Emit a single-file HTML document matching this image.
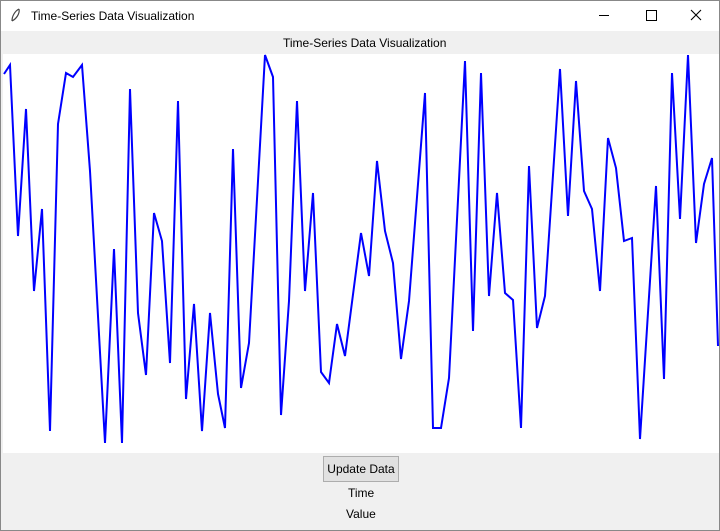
<!DOCTYPE html>
<html><head><style>
body{margin:0;width:720px;height:531px;overflow:hidden;font-family:"Liberation Sans",sans-serif;background:#f0f0f0;position:relative}
.win{position:absolute;left:0;top:0;width:718px;height:529px;border:1px solid #888;background:#f0f0f0}
.tb{position:absolute;left:0;top:0;width:718px;height:30px;background:#fff}
.t{position:absolute;font-size:12px;color:#000}
.btn{position:absolute;left:322px;top:455px;width:74px;height:24px;border:1px solid #adadad;background:#e1e1e1;font-size:12px;text-align:center;line-height:24px}
</style></head><body>
<div class="win">
<div class="tb"></div>
<svg style="position:absolute;left:8px;top:7px" width="14" height="16"><path d="M10 1 C6 3 3 8 3 13 M10 1 C11 6 7 11 3 13" stroke="#444" fill="none" stroke-width="1.2"/></svg>
<div class="t" style="left:30px;top:8px">Time-Series Data Visualization</div>
<div style="position:absolute;left:598px;top:14px;width:10px;height:1px;background:#000"></div>
<div style="position:absolute;left:645px;top:9px;width:9px;height:9px;border:1px solid #000"></div>
<svg style="position:absolute;left:689px;top:8px" width="12" height="12"><path d="M1 1 L11 11 M11 1 L1 11" stroke="#000" stroke-width="1.1"/></svg>
<div class="t" style="left:282px;top:35px">Time-Series Data Visualization</div>
<svg style="position:absolute;left:2px;top:53px" width="716" height="399" viewBox="2 53 716 399"><rect x="2" y="53" width="716" height="399" fill="#fff"/>
<polyline fill="none" stroke="#0000ff" stroke-width="2" points="3,73 9,64 17,235 25,108 33,290 41,208 49,430 57,123 65,72 72,76 81,64 89,170 104,442 113,248 121,442 129,88 137,312 145,374 153,212 161,240 169,362 177,100 185,398 193,303 201,430 209,312 217,393 224,427 232,148 240,387 248,342 264,54 272,76 280,414 288,300 296,100 304,290 312,192 320,371 328,382 336,323 344,355 360,232 368,275 376,160 384,230 392,262 400,358 408,300 424,92 432,427 440,427 448,377 464,60 472,330 480,72 488,295 496,192 504,292 512,299 520,427 528,165 536,327 544,295 559,68 567,215 575,80 583,190 591,208 599,290 607,137 615,167 623,240 631,237 639,438 655,185 663,378 671,72 679,218 687,54 695,242 703,183 711,157 717,345"/></svg>
<div class="btn">Update Data</div>
<div class="t" style="left:347px;top:485px">Time</div>
<div class="t" style="left:345px;top:506px">Value</div>
</div>
</body></html>
